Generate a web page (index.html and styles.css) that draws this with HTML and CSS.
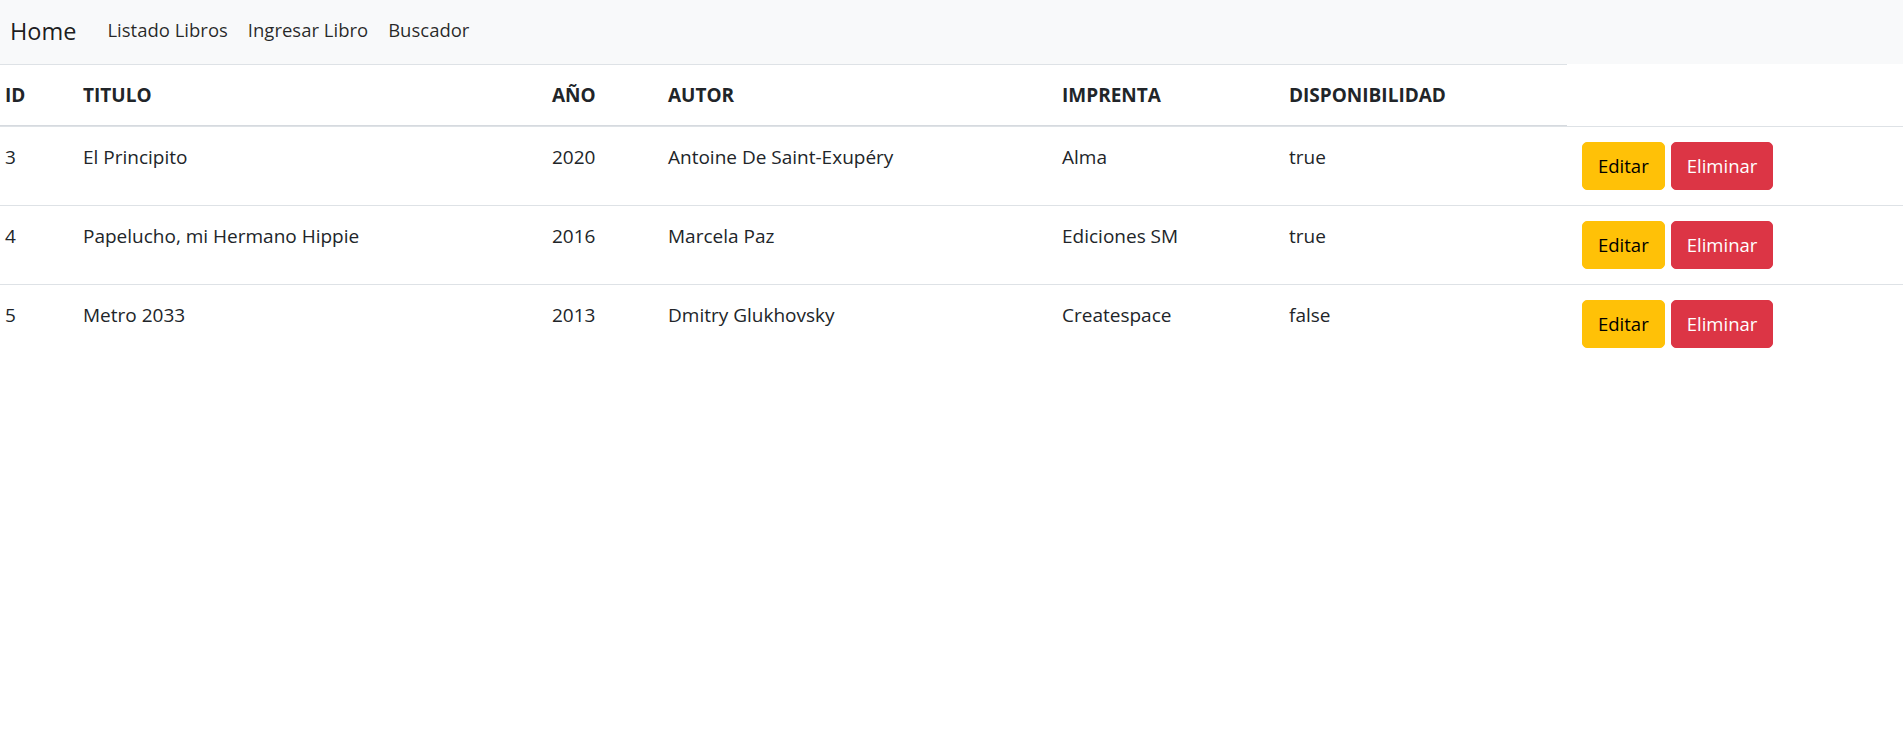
FILE: index.html
```html
<!DOCTYPE html>
<html lang="es">
<head>
<meta charset="utf-8">
<title>Listado Libros</title>
<link rel="stylesheet" href="styles.css">
</head>
<body>
<nav class="navbar">
  <a class="brand" href="#">Home</a>
  <ul class="nav">
    <li><a class="nav-link" href="#">Listado Libros</a></li>
    <li><a class="nav-link" href="#">Ingresar Libro</a></li>
    <li><a class="nav-link" href="#">Buscador</a></li>
  </ul>
</nav>
<table class="table">
  <colgroup>
    <col class="c-id"><col class="c-titulo"><col class="c-anio"><col class="c-autor"><col class="c-imprenta"><col class="c-disp"><col class="c-acc">
  </colgroup>
  <thead>
    <tr>
      <th>ID</th><th>TITULO</th><th>AÑO</th><th>AUTOR</th><th>IMPRENTA</th><th>DISPONIBILIDAD</th>
    </tr>
  </thead>
  <tbody>
    <tr>
      <td>3</td><td>El Principito</td><td>2020</td><td>Antoine De Saint-Exupéry</td><td>Alma</td><td>true</td>
      <td class="acciones"><div class="btns"><button class="btn btn-warning">Editar</button><button class="btn btn-danger">Eliminar</button></div></td>
    </tr>
    <tr>
      <td>4</td><td>Papelucho, mi Hermano Hippie</td><td>2016</td><td>Marcela Paz</td><td>Ediciones SM</td><td>true</td>
      <td class="acciones"><div class="btns"><button class="btn btn-warning">Editar</button><button class="btn btn-danger">Eliminar</button></div></td>
    </tr>
    <tr>
      <td>5</td><td>Metro 2033</td><td>2013</td><td>Dmitry Glukhovsky</td><td>Createspace</td><td>false</td>
      <td class="acciones"><div class="btns"><button class="btn btn-warning">Editar</button><button class="btn btn-danger">Eliminar</button></div></td>
    </tr>
  </tbody>
</table>
</body>
</html>
```
FILE: styles.css
```css
* { box-sizing: border-box; }

body {
  margin: 0;
  font-family: "Open Sans", "Noto Sans", sans-serif;
  font-size: 19px;
  line-height: 30px;
  color: #212529;
  background: #fff;
}

.navbar {
  height: 64px;
  background: #f8f9fa;
  display: flex;
  align-items: center;
  padding: 0 10px 4px;
}

.brand {
  font-size: 23.5px;
  line-height: 36px;
  color: rgba(0, 0, 0, 0.9);
  text-decoration: none;
  margin-right: 21px;
  margin-top: 2px;
}

.nav {
  list-style: none;
  margin: 0;
  padding: 0;
  display: flex;
}

.nav-link {
  display: block;
  padding: 0 10px;
  font-size: 18.5px;
  color: rgba(0, 0, 0, 0.85);
  text-decoration: none;
}

.table {
  width: 100%;
  table-layout: fixed;
  border-collapse: separate;
  border-spacing: 0;
}

.c-id { width: 78px; }
.c-titulo { width: 469px; }
.c-anio { width: 116px; }
.c-autor { width: 394px; }
.c-imprenta { width: 227px; }
.c-disp { width: 283px; }
.c-acc { width: 336px; }

.table th {
  text-align: left;
  font-weight: 700;
  padding: 15px 5px;
  border-top: 1px solid #dee2e6;
  border-bottom: 1px solid #d6dadf;
  vertical-align: middle;
}

.table td {
  padding: 15px 5px;
  border-top: 1px solid #dee2e6;
  vertical-align: top;
}

.table td.acciones {
  padding-left: 15px;
}

.btns {
  display: flex;
  gap: 6px;
}

.btn {
  font-family: inherit;
  font-size: 18.5px;
  line-height: 30px;
  padding: 8px 15px;
  border: 1px solid transparent;
  border-radius: 5px;
  cursor: pointer;
}

.btn-warning {
  background: #ffc107;
  border-color: #ffc107;
  color: #000;
}

.btn-danger {
  background: #dc3545;
  border-color: #dc3545;
  color: #fff;
}
```
